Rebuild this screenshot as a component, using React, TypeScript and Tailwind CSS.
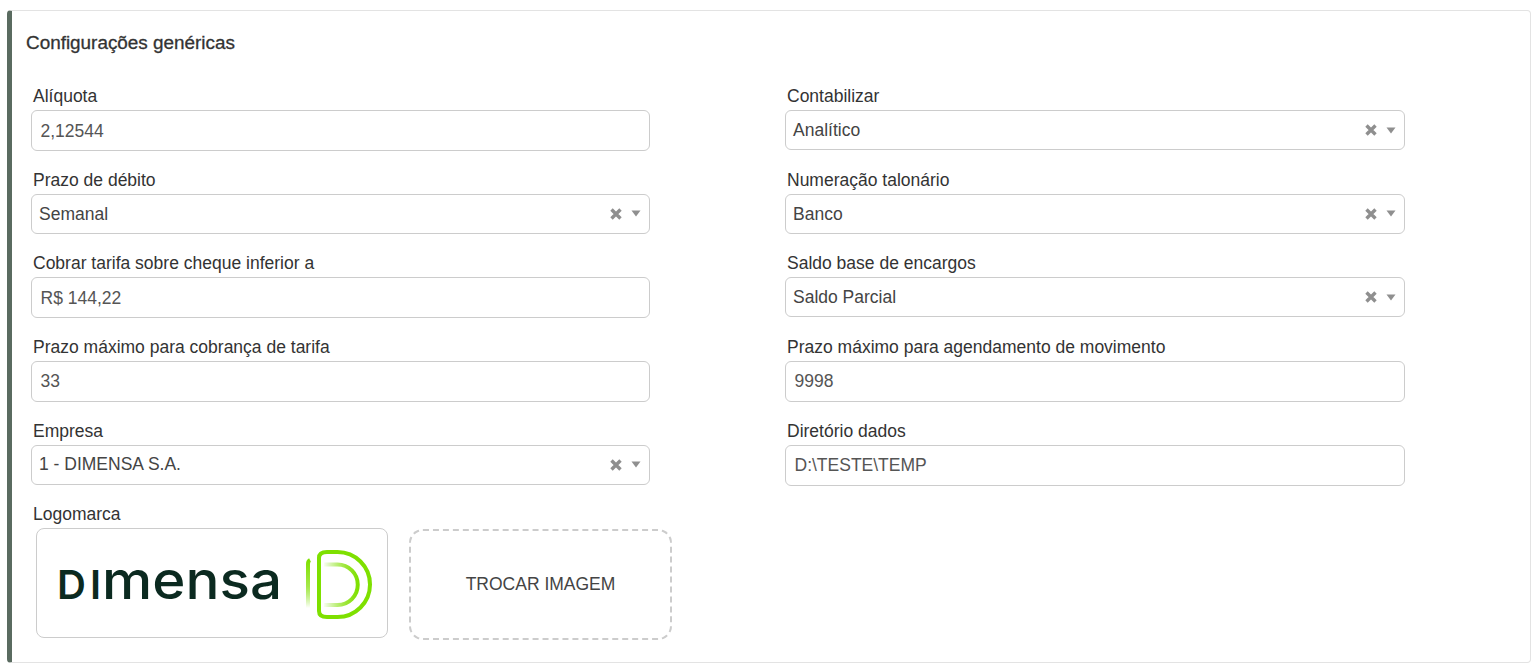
import React from 'react';

const font = "font-['Liberation_Sans',Arial,sans-serif]";

const TextField: React.FC<{ label: string; value: string }> = ({ label, value }) => (
  <div className="flex flex-col">
    <label className="h-[25px] pl-[2px] text-[17.5px] leading-[22px] text-[#333]">{label}</label>
    <div className="flex h-[41px] items-center rounded-[6px] border border-[#ccc] bg-white pl-[8.5px] text-[17.5px] text-[#555]">
      {value}
    </div>
  </div>
);

const SelectField: React.FC<{ label: string; value: string }> = ({ label, value }) => (
  <div className="flex flex-col">
    <label className="h-[25px] pl-[2px] text-[17.5px] leading-[22px] text-[#333]">{label}</label>
    <div className="flex h-[40px] items-center justify-between rounded-[6px] border border-[#ccc] bg-white pl-[7px] pr-[8px] text-[17.5px] text-[#444]">
      <span>{value}</span>
      <span className="flex items-center gap-[9px]">
        <svg width="12" height="12" viewBox="0 0 12 12">
          <path d="M1.5 1.5 10.5 10.5M10.5 1.5 1.5 10.5" stroke="#8f8f8f" strokeWidth="3.4" />
        </svg>
        <svg width="10" height="7" viewBox="0 0 10 7">
          <path d="M0.5 0.5H9.5L5 6.5Z" fill="#8f8f8f" />
        </svg>
      </span>
    </div>
  </div>
);

const DimensaLogo = () => (
  <svg width="350" height="108" viewBox="1 1 350 108">
    <defs>
      <linearGradient id="fadeBar" x1="0" y1="32" x2="0" y2="80" gradientUnits="userSpaceOnUse">
        <stop offset="0" stopColor="#7ee000" />
        <stop offset="0.55" stopColor="#a5e84a" />
        <stop offset="1" stopColor="#7ee000" stopOpacity="0" />
      </linearGradient>
      <linearGradient id="fadeInner" x1="288" y1="0" x2="322" y2="0" gradientUnits="userSpaceOnUse">
        <stop offset="0" stopColor="#7ee000" stopOpacity="0.05" />
        <stop offset="0.65" stopColor="#9be534" />
        <stop offset="1" stopColor="#7ee000" />
      </linearGradient>
    </defs>
    <text x="21 54" y="71" fontFamily="Inter, sans-serif" fontWeight="600" fill="#0b2a20" fontSize="40">
      DI
    </text>
    <text x="66" y="71" textLength="180" lengthAdjust="spacingAndGlyphs" fontFamily="Inter, sans-serif" fontWeight="500" fill="#0b2a20" fontSize="53">
      mensa
    </text>
    <path d="M272 80V36Q272 33 274 32" fill="none" stroke="url(#fadeBar)" strokeWidth="4" />
    <path d="M283 30Q283 24 291 24H301.5A32.5 32.5 0 0 1 301.5 89H291Q283 89 283 83Z" fill="none" stroke="#7ee000" strokeWidth="4" />
    <path d="M288 36.5H301.5A20.25 20.25 0 0 1 301.5 77H288" fill="none" stroke="url(#fadeInner)" strokeWidth="4" />
  </svg>
);

export default function App() {
  return (
    <div className={`${font} h-[670px] w-[1540px] bg-white pl-[7px] pr-[9px] pt-[10px]`}>
      <div className="h-[653px] rounded-[4px] border border-[#e3e3e3] border-l-[5px] border-l-[#5a6b60] bg-white">
        <h2 className="pl-[14px] pt-[20px] text-[18.9px] font-normal leading-[24px] text-[#333] [-webkit-text-stroke:0.3px_#333]">
          Configurações genéricas
        </h2>
        <div className="mt-[30.2px] grid grid-cols-[619px_620px] gap-x-[135px] pl-[19px]">
          <div className="flex flex-col">
            <div className="h-[83.6px]"><TextField label="Alíquota" value="2,12544" /></div>
            <div className="h-[83.6px]"><SelectField label="Prazo de débito" value="Semanal" /></div>
            <div className="h-[83.6px]"><TextField label="Cobrar tarifa sobre cheque inferior a" value="R$ 144,22" /></div>
            <div className="h-[83.6px]"><TextField label="Prazo máximo para cobrança de tarifa" value="33" /></div>
            <div className="h-[83.6px]"><SelectField label="Empresa" value="1 - DIMENSA S.A." /></div>
            <div className="flex flex-col">
              <label className="h-[25px] pl-[2px] text-[17.5px] leading-[22px] text-[#333]">Logomarca</label>
              <div className="flex items-start gap-[21px] pl-[5px]">
                <div className="flex h-[110px] w-[352px] shrink-0 items-center justify-center rounded-[8px] border border-[#ccc] bg-white">
                  <DimensaLogo />
                </div>
                <div className="mt-[1px] flex h-[111px] w-[263px] shrink-0 items-center justify-center rounded-[14px] border-2 border-dashed border-[#ccc] pb-[2px] text-[17.5px] text-[#444]">
                  TROCAR IMAGEM
                </div>
              </div>
            </div>
          </div>
          <div className="flex flex-col">
            <div className="h-[83.6px]"><SelectField label="Contabilizar" value="Analítico" /></div>
            <div className="h-[83.6px]"><SelectField label="Numeração talonário" value="Banco" /></div>
            <div className="h-[83.6px]"><SelectField label="Saldo base de encargos" value="Saldo Parcial" /></div>
            <div className="h-[83.6px]"><TextField label="Prazo máximo para agendamento de movimento" value="9998" /></div>
            <div className="h-[83.6px]"><TextField label="Diretório dados" value="D:\TESTE\TEMP" /></div>
          </div>
        </div>
      </div>
    </div>
  );
}
